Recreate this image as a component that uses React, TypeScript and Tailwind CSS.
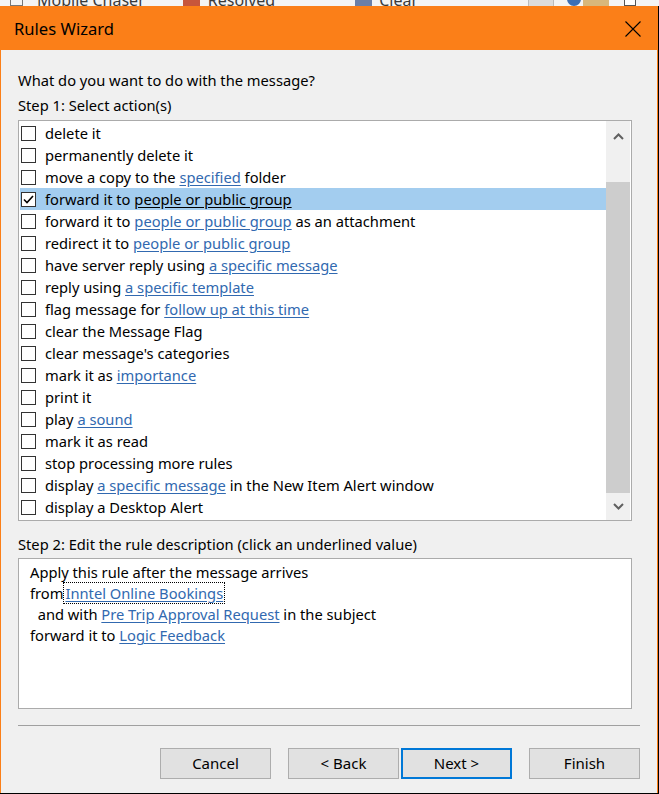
import React from "react";

type Part = { t: string; link?: boolean };

const actions: { parts: Part[]; checked?: boolean }[] = [
  { parts: [{ t: "delete it" }] },
  { parts: [{ t: "permanently delete it" }] },
  { parts: [{ t: "move a copy to the " }, { t: "specified", link: true }, { t: " folder" }] },
  { parts: [{ t: "forward it to " }, { t: "people or public group", link: true }], checked: true },
  {
    parts: [
      { t: "forward it to " },
      { t: "people or public group", link: true },
      { t: " as an attachment" },
    ],
  },
  { parts: [{ t: "redirect it to " }, { t: "people or public group", link: true }] },
  { parts: [{ t: "have server reply using " }, { t: "a specific message", link: true }] },
  { parts: [{ t: "reply using " }, { t: "a specific template", link: true }] },
  { parts: [{ t: "flag message for " }, { t: "follow up at this time", link: true }] },
  { parts: [{ t: "clear the Message Flag" }] },
  { parts: [{ t: "clear message's categories" }] },
  { parts: [{ t: "mark it as " }, { t: "importance", link: true }] },
  { parts: [{ t: "print it" }] },
  { parts: [{ t: "play " }, { t: "a sound", link: true }] },
  { parts: [{ t: "mark it as read" }] },
  { parts: [{ t: "stop processing more rules" }] },
  {
    parts: [
      { t: "display " },
      { t: "a specific message", link: true },
      { t: " in the New Item Alert window" },
    ],
  },
  { parts: [{ t: "display a Desktop Alert" }] },
];

function Checkbox({ checked }: { checked?: boolean }) {
  return (
    <div className="w-[15px] h-[15px] border border-[#333333] bg-white flex items-center justify-center shrink-0">
      {checked && (
        <svg width="11" height="9" viewBox="0 0 11 9">
          <path d="M1 4.5 L4 7.5 L10 1" fill="none" stroke="#000" strokeWidth="1.6" />
        </svg>
      )}
    </div>
  );
}

function WinButton({ label, focused }: { label: string; focused?: boolean }) {
  return (
    <button
      className={
        "w-[111px] h-[31px] bg-[#e1e1e1] text-[15px] text-black leading-none " +
        (focused ? "border-2 border-[#0078d7]" : "border border-[#adadad]")
      }
    >
      {label}
    </button>
  );
}

export default function App() {
  return (
    <div
      className="w-[659px] h-[794px] bg-black overflow-hidden flex flex-col"
      style={{ fontFamily: '"Noto Sans", "Open Sans", sans-serif' }}
    >
      {/* background window peeking out */}
      <div className="h-[6px] w-[659px] bg-[#f4f4f4] overflow-hidden shrink-0">
        <div className="flex items-start -mt-[12px] text-[16px] text-[#3a3a3a] whitespace-nowrap">
          <div className="ml-[10px] mt-[6px] w-[13px] h-[12px] border border-[#777]" />
          <span className="ml-[14px]">Mobile Chaser</span>
          <div className="ml-[38px] mt-[8px] w-[17px] h-[12px] bg-[#c7563b]" />
          <span className="ml-[8px]">Resolved</span>
          <div className="ml-[80px] mt-[8px] w-[17px] h-[12px] bg-[#6a7fa8]" />
          <span className="ml-[7px]">Clear</span>
          <div className="ml-[110px] mt-[6px] w-[26px] h-[14px] bg-[#dcdcdc] border border-[#bbb]" />
          <div className="ml-[13px] mt-[4px] w-[14px] h-[14px] rounded-full bg-[#3d6fb5]" />
          <div className="ml-[2px] mt-[4px] w-[26px] h-[14px] bg-[#d8b77a]" />
          <div className="ml-[15px] mt-[8px] w-[12px] h-[10px] border border-[#555] bg-white" />
        </div>
      </div>

      <div className="w-[658px] flex-1 flex flex-col bg-[#f0f0f0] border-x border-[#fb7f18] mb-[1px]">
        {/* title bar */}
        <div className="h-[44px] bg-[#fb7f18] flex items-center justify-between pl-[13px] pr-[16px] shrink-0">
          <span className="text-[16.6px] text-black mt-[3px]">Rules Wizard</span>
          <svg width="16" height="16" viewBox="0 0 16 16" className="mt-[1px]">
            <path d="M0.5 0.5 L15.5 15.5 M15.5 0.5 L0.5 15.5" stroke="#000" strokeWidth="1.1" />
          </svg>
        </div>

        <div className="px-[17px] flex flex-col text-[14.7px] text-black">
          <div className="mt-[20px] leading-[20px]">What do you want to do with the message?</div>
          <div className="mt-[5px] leading-[20px]">Step 1: Select action(s)</div>

          {/* actions list */}
          <div className="mt-[5px] w-[614px] h-[401px] border border-[#ababab] bg-white flex">
            <div className="flex-1 pt-[1px] pl-[1px]">
              {actions.map((a, i) => (
                <div
                  key={i}
                  className={
                    "h-[22px] flex items-center whitespace-nowrap " + (a.checked ? "bg-[#a3cdef]" : "")
                  }
                >
                  <div className="ml-[1px]">
                    <Checkbox checked={a.checked} />
                  </div>
                  <span className="ml-[9px]">
                    {a.parts.map((p, j) =>
                      p.link ? (
                        <span
                          key={j}
                          className={
                            "underline underline-offset-2 " + (a.checked ? "text-black" : "text-[#3169b0]")
                          }
                        >
                          {p.t}
                        </span>
                      ) : (
                        <span key={j} className="whitespace-pre">
                          {p.t}
                        </span>
                      )
                    )}
                  </span>
                </div>
              ))}
            </div>
            {/* scrollbar */}
            <div className="w-[24px] mr-[1px] bg-[#f0f0f0] flex flex-col">
              <div className="h-[30px] flex items-center justify-center">
                <svg width="11" height="7" viewBox="0 0 11 7">
                  <path d="M1 6 L5.5 1.5 L10 6" fill="none" stroke="#606060" strokeWidth="2" />
                </svg>
              </div>
              <div className="flex-1 flex flex-col">
                <div className="mt-[31px] flex-1 bg-[#cdcdcd]" />
              </div>
              <div className="h-[27px] flex items-center justify-center">
                <svg width="11" height="7" viewBox="0 0 11 7">
                  <path d="M1 1 L5.5 5.5 L10 1" fill="none" stroke="#606060" strokeWidth="2" />
                </svg>
              </div>
            </div>
          </div>

          <div className="mt-[13px] leading-[20px]">
            Step 2: Edit the rule description (click an underlined value)
          </div>

          {/* description */}
          <div className="mt-[4px] w-[614px] h-[151px] border border-[#ababab] bg-white pt-[3px] pl-[11px] leading-[21px]">
            <div>Apply this rule after the message arrives</div>
            <div className="whitespace-pre">
              from
              <span className="border border-dotted border-black text-[#3169b0] underline underline-offset-2 px-[1px]">
                Inntel Online Bookings
              </span>
            </div>
            <div className="whitespace-pre">
              {"  and with "}
              <span className="text-[#3169b0] underline underline-offset-2">Pre Trip Approval Request</span>
              {" in the subject"}
            </div>
            <div className="whitespace-pre">
              {"forward it to "}
              <span className="text-[#3169b0] underline underline-offset-2">Logic Feedback</span>
            </div>
          </div>

          <div className="mt-[16px] w-[622px] h-[1px] bg-[#a0a0a0]" />

          {/* buttons */}
          <div className="mt-[22px] flex pl-[142px]">
            <WinButton label="Cancel" />
            <div className="ml-[17px]">
              <WinButton label="< Back" />
            </div>
            <div className="ml-[2px]">
              <WinButton label="Next >" focused />
            </div>
            <div className="ml-[17px]">
              <WinButton label="Finish" />
            </div>
          </div>
        </div>
      </div>
    </div>
  );
}
